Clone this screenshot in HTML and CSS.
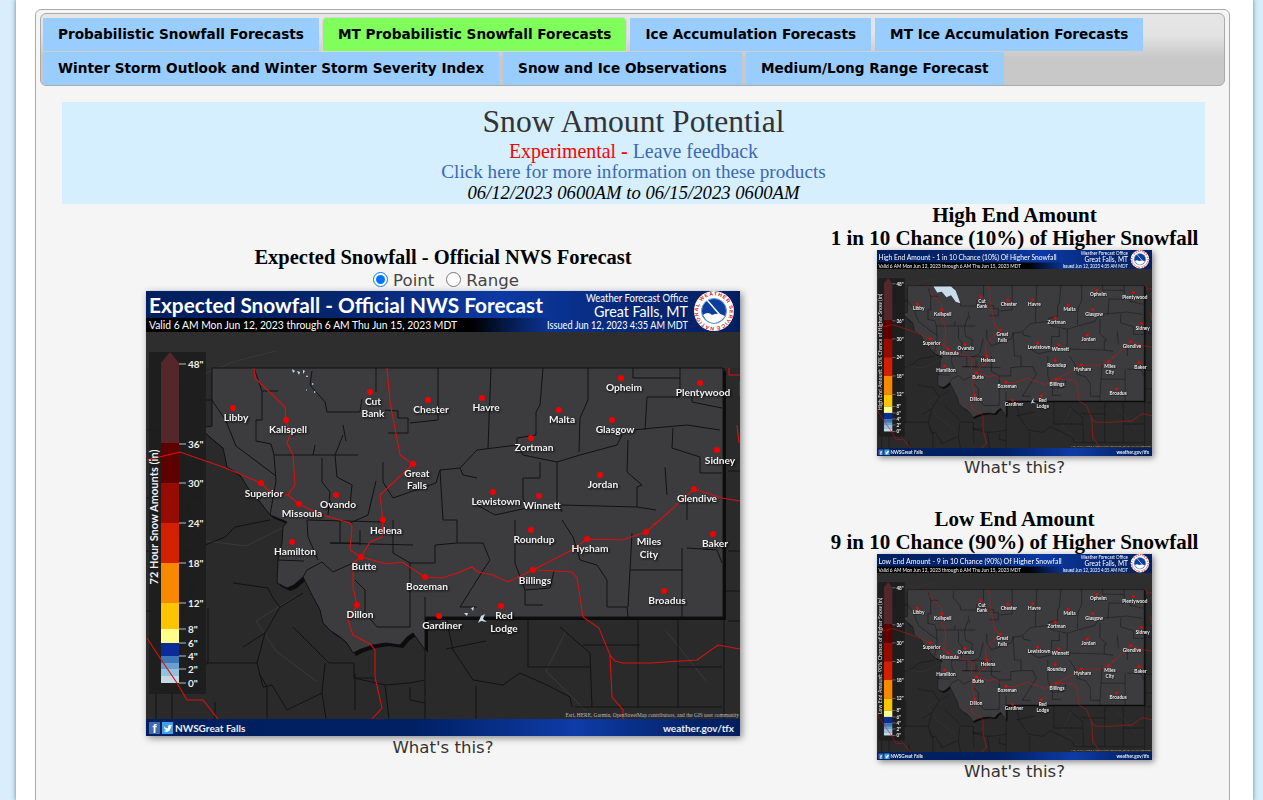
FILE: index.html
```html
<!DOCTYPE html>
<html lang="en">
<head>
<meta charset="utf-8">
<title>Snow Amount Potential</title>
<link rel="stylesheet" href="styles.css">
</head>
<body>
<svg class="sprite" aria-hidden="true">
  <defs>
    <linearGradient id="band" x1="0" x2="1" y1="0" y2="0">
      <stop offset="0" stop-color="#001f5f"/><stop offset="0.33" stop-color="#05256e"/><stop offset="0.6" stop-color="#0c3aa4"/><stop offset="0.8" stop-color="#06297a"/><stop offset="1" stop-color="#001f5f"/>
    </linearGradient>
    <linearGradient id="strip" x1="0" x2="1" y1="0" y2="0">
      <stop offset="0.55" stop-color="#000"/><stop offset="0.68" stop-color="#000" stop-opacity="0"/>
    </linearGradient>
    <linearGradient id="foot" x1="0" x2="1" y1="0" y2="0">
      <stop offset="0" stop-color="#001f5f"/><stop offset="0.45" stop-color="#002064"/><stop offset="0.72" stop-color="#0e3ca8"/><stop offset="0.92" stop-color="#03236a"/><stop offset="1" stop-color="#001f5f"/>
    </linearGradient>
    <path id="ring" d="M568 36 a15.8 15.8 0 1 1 0.01 0"/>
    <polygon id="mt" points="66,77 577,77 577,326 279,326 279,359 267,342 261,346 254,354 240,352 227,354 215,358 207,362 201,352 194,346 185,340 177,332 174,319 166,304 157,286 148,294 141,297 131,292 132,269 136,252 137,236 141,231 124,224 114,211 104,200 94,184 81,176 79,166 77,157 66,148 54,137 66,135"/>
    <g id="base">
      <rect width="594" height="445" class="m-bg"/>
      <rect y="41" width="594" height="36" class="m-top"/>
      <path class="c-river" d="M20 230 60 250 100 255 140 235M150 305 110 330 130 360 170 390M420 340 400 380 440 420M40 90 90 70 130 60M520 340 560 390"/>
      <path class="c-out" d="M2 139 27 141M1 207H54V164M34 109H66M34 109V87M46 306V269L59 254 47 236 40 207M62 317V372H111L119 342 134 316 157 302M147 336 183 372H208V387H229M26 402V428M69 411V428M121 396V428M113 382 121 396M209 382V419M264 396V409M279 356V428M382 326V376H444M492 329V416M532 329V416M532 376H576M437 354H494M414 336 444 362 446 416M429 416H576M374 382 357 394 327 389 307 359 300 326M374 382 401 394 424 406 426 416M578 77V428M582 180H594M582 330H594M582 260H594M59 254 79 246 89 236 124 229M47 296 37 319M87 292 122 297 127 307 134 316M97 356 119 342M111 372 117 396 126 394 141 419 176 402 179 372M208 387 239 394 264 392 279 389M239 394 243 428M176 402 180 428M264 409 279 412M62 372 26 402 10 380M0 260H46M0 320H37M37 319 30 350 62 372M300 358 340 350M330 428V395M600 300H578M10 428V402"/>
      <use href="#mt" class="mt-shadow" x="3" y="3"/>
      <use href="#mt" class="mt"/>
      <path class="c-river" d="M80 140 120 165 150 170M230 150 270 160 300 190M330 190 350 170 370 190M480 230 510 215 540 210M420 270 400 290 380 325"/>
      <path class="c-in" d="M108 77 116 100H132M116 100V129H110V150L125 153 128 164H212M181 121H214L216 108M230 77V101M239 119 252 120V127H262V142H242M292 77V129L264 132M181 121 179 111 164 94 166 80M197 134 200 150M197 144 189 164 191 186 206 194 204 214 191 217 184 210M176 167V191L184 201 182 224M169 154 167 164M237 171V191L247 207 290 192M345 77 342 157M397 77 394 114 390 121V144L371 147V154L331 159M442 77V109L434 127 433 161M487 77V87H534M534 77V106H501L499 139M546 106V111L576 117M487 139 507 137 541 134 574 139M476 144 471 154 434 164 411 171 377 164 371 154M527 137 526 157 554 166V182H576M482 149 481 181 496 194 491 196V216M519 176 521 204M411 171V211L416 221M377 187H394V171M377 187V207L381 217M331 187 317 184 314 177 294 179M314 177 331 159M331 214 349 224 381 217M416 214 491 216 510 219M311 229V252H337L344 269 336 281 326 297 314 316H331M369 229V272L379 299 404 297 408 280M379 299V314H397M416 229 427 246 434 269 451 274 461 289V316H481L482 326M486 242 484 279H537M536 257V326M541 257 571 259 576 272M541 229V205M484 279 482 316M66 109 80 130 90 155 130 185M230 190 222 224 204 232M158 270 132 269M184 252H214M176 271 161 279 157 286M194 252V229M214 254V239M247 229V262L264 272V336M219 299V322L231 336H264M289 254V272H264M279 306V326M176 271 187 281 207 272M209 289 219 299M267 254 184 252M161 229 162 246 172 269M290 192 294 179M294 179 297 229 311 229M237 231 161 229M289 254 311 252M128 164 130 190 124 224"/>
      <rect x="3" y="61" width="57" height="342" class="lg-bg"/>
      <polygon points="24,61 33,72 33,152 15,152 15,72" class="lg0"/>
      <rect x="15" y="152" width="18" height="40" class="lg1"/>
      <rect x="15" y="192" width="18" height="40" class="lg2"/>
      <rect x="15" y="232" width="18" height="40" class="lg3"/>
      <rect x="15" y="272" width="18" height="40" class="lg4"/>
      <rect x="15" y="312" width="18" height="26" class="lg5"/>
      <rect x="15" y="338" width="18" height="14" class="lg6"/>
      <rect x="15" y="352" width="18" height="13" class="lg7"/>
      <rect x="15" y="365" width="18" height="7" class="lg8"/>
      <rect x="15" y="372" width="18" height="6" class="lg9"/>
      <rect x="15" y="378" width="18" height="7" class="lg10"/>
      <rect x="15" y="385" width="18" height="7" class="lg11"/>
      <path class="tick" d="M33 73H40M33 153H40M33 192H40M33 232H40M33 272H40M33 312H40M33 338H40M33 352H40M33 365H40M33 378H40M33 392H40"/>
      <g class="lg-t">
        <text x="42" y="77">48"</text><text x="42" y="157">36"</text><text x="42" y="196">30"</text><text x="42" y="236">24"</text><text x="42" y="276">18"</text><text x="42" y="316">12"</text><text x="42" y="342">8"</text><text x="42" y="356">6"</text><text x="42" y="369">4"</text><text x="42" y="382">2"</text><text x="42" y="396">0"</text>
      </g>
      <path class="road" d="M108 77 109 87 139 116 140 129 144 144 141 152 147 164 149 194 142 204 153 213M1 169 34 161 77 176 115 192 127 204 142 204M153 213 176 224 204 232 206 236 204 259 215 266 241 273 256 271 279 286 296 287 314 281 326 276 332 281 347 284 362 291 387 279 426 259 441 248 476 249 500 241 514 229 548 198 576 207 594 210M514 229 507 234M241 77 244 111 254 164 267 173 234 204 237 231 236 246 224 251 215 266 207 272 207 296 211 314 202 329 207 344 224 353 229 359 229 386 236 417 226 428M391 279 426 281 431 287 437 326 453 337 464 364 466 406 477 419V428M464 364 469 370 477 372 504 372 551 369 572 354 594 358M1 347 14 367 31 392 41 409 57 409 72 428M583 77V84H594M591 134 593 152M594 90V105"/>
      <g class="dots">
        <circle cx="87" cy="117" r="3"/><circle cx="140" cy="129" r="3"/><circle cx="224" cy="101" r="3"/><circle cx="282" cy="109" r="3"/><circle cx="336" cy="107" r="3"/><circle cx="413" cy="119" r="3"/><circle cx="475" cy="87" r="3"/><circle cx="554" cy="92" r="3"/><circle cx="466" cy="129" r="3"/><circle cx="385" cy="147" r="3"/><circle cx="571" cy="159" r="3"/><circle cx="454" cy="184" r="3"/><circle cx="347" cy="201" r="3"/><circle cx="393" cy="205" r="3"/><circle cx="548" cy="198" r="3"/><circle cx="267" cy="173" r="3"/><circle cx="115" cy="192" r="3"/><circle cx="190" cy="204" r="3"/><circle cx="153" cy="213" r="3"/><circle cx="237" cy="229" r="3"/><circle cx="146" cy="251" r="3"/><circle cx="215" cy="266" r="3"/><circle cx="279" cy="286" r="3"/><circle cx="211" cy="314" r="3"/><circle cx="293" cy="325" r="3"/><circle cx="355" cy="315" r="3"/><circle cx="385" cy="239" r="3"/><circle cx="441" cy="248" r="3"/><circle cx="387" cy="279" r="3"/><circle cx="500" cy="241" r="3"/><circle cx="567" cy="243" r="3"/><circle cx="518" cy="300" r="3"/>
      </g>
      <g class="city">
        <text x="90" y="130">Libby</text><text x="142" y="142">Kalispell</text><text x="227" y="114">Cut</text><text x="227" y="126">Bank</text><text x="285" y="122">Chester</text><text x="340" y="120">Havre</text><text x="416" y="132">Malta</text><text x="478" y="100">Opheim</text><text x="557" y="105">Plentywood</text><text x="469" y="142">Glasgow</text><text x="388" y="160">Zortman</text><text x="574" y="173">Sidney</text><text x="457" y="197">Jordan</text><text x="350" y="214">Lewistown</text><text x="396" y="218">Winnett</text><text x="551" y="211">Glendive</text><text x="271" y="186">Great</text><text x="271" y="198">Falls</text><text x="118" y="206">Superior</text><text x="192" y="217">Ovando</text><text x="156" y="226">Missoula</text><text x="240" y="243">Helena</text><text x="149" y="264">Hamilton</text><text x="218" y="279">Butte</text><text x="281" y="299">Bozeman</text><text x="214" y="327">Dillon</text><text x="296" y="338">Gardiner</text><text x="358" y="328">Red</text><text x="358" y="341">Lodge</text><text x="388" y="252">Roundup</text><text x="444" y="261">Hysham</text><text x="389" y="293">Billings</text><text x="503" y="254">Miles</text><text x="503" y="267">City</text><text x="569" y="256">Baker</text><text x="521" y="313">Broadus</text>
      </g>
      <rect width="594" height="41" fill="url(#band)"/>
      <rect y="27" width="594" height="14" fill="url(#strip)"/>
      <text x="542" y="11" class="hd r" textLength="102" lengthAdjust="spacingAndGlyphs">Weather Forecast Office</text>
      <text x="542" y="26" class="hd r big" textLength="94" lengthAdjust="spacingAndGlyphs">Great Falls, MT</text>
      <text x="542" y="38" class="hd r" textLength="141" lengthAdjust="spacingAndGlyphs">Issued Jun 12, 2023 4:35 AM MDT</text>
      <text x="3" y="38" class="hd" textLength="308" lengthAdjust="spacingAndGlyphs">Valid 6 AM Mon Jun 12, 2023 through 6 AM Thu Jun 15, 2023 MDT</text>
      <circle cx="568" cy="20" r="20" class="lo-w"/>
      <text class="lo-t"><textPath href="#ring" textLength="96">NATIONAL WEATHER SERVICE</textPath></text>
      <circle cx="568" cy="20" r="12.5" class="lo-b"/>
      <path class="lo-c" d="M557 24Q562 20 566 24 572 21 579 25 574 32 568 32 561 32 557 24Z"/>
      <path class="lo-s" d="M561 9 574 24"/>
      <rect y="428" width="594" height="17" fill="url(#foot)"/>
      <rect x="3" y="431" width="11" height="12" class="fb"/>
      <text x="6.5" y="442" class="fb-t">f</text>
      <rect x="16" y="431" width="11" height="12" class="tw"/>
      <path class="tw-g" d="M18 435Q20 438 22 437 22 433 25 434L26 434 25 436Q24 441 20 441 19 441 18 440 20 440 20 439 18 438 18 435Z"/>
      <text x="29" y="441" class="ft">NWSGreat Falls</text>
      <text x="588" y="441" class="ft r">weather.gov/tfx</text>
      <text x="593" y="426" class="cr r">Esri, HERE, Garmin, OpenStreetMap contributors, and the GIS user community</text>
    </g>
  </defs>
</svg>
<div class="page">
  <div class="panel">
    <nav class="tabs">
      <a class="tab">Probabilistic Snowfall Forecasts</a>
      <a class="tab active">MT Probabilistic Snowfall Forecasts</a>
      <a class="tab">Ice Accumulation Forecasts</a>
      <a class="tab">MT Ice Accumulation Forecasts</a>
      <a class="tab">Winter Storm Outlook and Winter Storm Severity Index</a>
      <a class="tab">Snow and Ice Observations</a>
      <a class="tab">Medium/Long Range Forecast</a>
    </nav>
    <main class="content">
      <header class="banner">
        <h1 class="title">Snow Amount Potential</h1>
        <div class="line l1"><span class="exp">Experimental</span> <b class="exp">-</b> <a class="link">Leave feedback</a></div>
        <div class="line l2"><a class="link">Click here for more information on these products</a></div>
        <div class="line l3 date">06/12/2023 0600AM to 06/15/2023 0600AM</div>
      </header>
      <div class="cols">
        <section class="main-col">
          <h2 class="head">Expected Snowfall - Official NWS Forecast</h2>
          <form class="choice">
            <label class="opt"><input type="radio" name="t" checked>Point</label>
            <label class="opt"><input type="radio" name="t">Range</label>
          </form>
          <svg class="map-big" viewBox="0 0 594 445" role="img" aria-label="Expected Snowfall map">
            <use href="#base"/>
            <text x="3" y="22" class="ttl" textLength="394" lengthAdjust="spacingAndGlyphs">Expected Snowfall - Official NWS Forecast</text>
            <path class="lake" d="M146 78l3 2-2 2zM151 80l3 1-1 3zM157 79l2 1-2 3zM161 84l1 2-2 0zM166 92l2 1-2 1zM160 98l1 1-1 1zM168 100l2 1-2 1z"/>
            <path class="lake" d="M335 325l4-2-2 5 4 3-6-1-3 2zM325 317l3-1-1 4zM318 322l4 0-1 3z"/>
            <text transform="translate(12 226) rotate(-90)" class="lg-n" textLength="135">72 Hour Snow Amounts (in)</text>
          </svg>
          <div class="what">What's this?</div>
        </section>
        <aside class="side-col">
          <div class="side">
            <h2 class="head side-h">High End Amount<br>1 in 10 Chance (10%) of Higher Snowfall</h2>
            <svg class="map-small" viewBox="0 0 594 445" role="img" aria-label="High end map">
              <use href="#base"/>
              <text x="3" y="22" class="ttl-s" textLength="385" lengthAdjust="spacingAndGlyphs">High End Amount - 1 in 10 Chance (10%) Of Higher Snowfall</text>
              <path class="lake" d="M122 79 160 79 170 88 180 115 170 112 160 98 150 102 140 90 130 92Z"/>
              <path class="lake" d="M335 325l4-6-2 8 6 4-8-1-3 2z"/>
              <text transform="translate(11 220) rotate(-90)" class="lg-n s" textLength="251">High End Amount: 10% Chance of Higher Snow (in)</text>
            </svg>
            <div class="what">What's this?</div>
          </div>
          <div class="side">
            <h2 class="head side-h">Low End Amount<br>9 in 10 Chance (90%) of Higher Snowfall</h2>
            <svg class="map-small" viewBox="0 0 594 445" role="img" aria-label="Low end map">
              <use href="#base"/>
              <text x="3" y="22" class="ttl-s" textLength="396" lengthAdjust="spacingAndGlyphs">Low End Amount - 9 in 10 Chance (90%) Of Higher Snowfall</text>
              <text transform="translate(11 220) rotate(-90)" class="lg-n s" textLength="251">Low End Amount: 90% Chance of Higher Snow (in)</text>
            </svg>
            <div class="what">What's this?</div>
          </div>
        </aside>
      </div>
    </main>
  </div>
</div>
</body>
</html>
```
FILE: styles.css
```css
html, body { margin: 0; padding: 0; height: 100%; overflow: hidden; }
body { background: #d8eefc; font-family: "DejaVu Sans", sans-serif; color: #333; }
.sprite { display: block; width: 0; height: 0; }
.page { height: 100vh; margin: 0 10px 0 16px; padding: 9px 23px 0 19px; background: #fff; box-shadow: 0 0 4px 1px rgba(70,100,120,.55); box-sizing: border-box; overflow: hidden; }
.panel { height: 1200px; box-sizing: border-box; padding: 3px 4px 0; border: 1px solid #aaa; border-radius: 6px; background: #f5f5f5; }
.tabs { display: flex; flex-wrap: wrap; align-content: flex-start; gap: 1px 4px; padding: 4px 2px 0; height: 67px; box-sizing: content-box; border: 1px solid #aaa; border-radius: 6px; background: linear-gradient(#e6e6e6 0, #e2e2e2 30%, #c8c8c8 62%, #c8c8c8 100%); }
.tab { height: 33px; padding: 0 15px; background: #99ccff; color: #000; font: bold 13.65px/33px "DejaVu Sans", sans-serif; white-space: nowrap; }
.active { background: #80ff5c; border-radius: 4px 4px 0 0; box-shadow: 0 0 0 1px #d8d8d8; }
.content { margin: 16px 20px 0 22px; }
.banner { background: #d6effe; text-align: center; height: 101.5px; font-family: "Liberation Serif", serif; line-height: 21px; }
.title { margin: 0; font-size: 31.6px; line-height: 39px; font-weight: 400; color: #333; }
.l1 { font-size: 19.9px; line-height: 20px; }
.l2 { font-size: 19.15px; }
.l3 { font-size: 18.7px; }
.exp { color: #f00; }
.link { color: #3b68b4; }
.date { font-style: italic; color: #000; }
.cols { display: grid; grid-template-columns: 2fr 1fr; }
.main-col { margin-top: 42px; text-align: center; }
.side-col { text-align: center; }
.head { margin: 0; font: bold 20.5px/23px "Liberation Serif", serif; color: #000; }
.side-h { font-size: 21px; }
.choice { height: 20px; padding: 2px 0 0 6px; line-height: 20px; font-size: 16.6px; color: #444; display: flex; justify-content: center; gap: 12px; }
.opt { display: inline-flex; align-items: center; }
.opt input { width: 15px; height: 15px; margin: 0 5px 3px 0; }
.map-big { display: block; width: 594px; height: 445px; margin: 0 auto; box-shadow: 2px 2px 7px rgba(0,0,0,.45); }
.map-small { display: block; width: 275px; height: 206px; margin: 0 auto; box-shadow: 2px 2px 6px rgba(0,0,0,.45); filter: blur(.35px); }
.what { padding-top: 1px; font-size: 16.6px; line-height: 22px; color: #333; }
.side { height: 304px; }

.m-bg { fill: #2b2a2b; }
.m-top { fill: #2e2e2e; }
.mt { fill: #3c3b3e; stroke: #111; stroke-width: 1; }
.mt-shadow { fill: #0c0c0c; }
.c-in, .c-out { fill: none; stroke: #121212; stroke-width: 1; }
.c-river { fill: none; stroke: #3f3f41; stroke-width: .7; }
.road { fill: none; stroke: #d81210; stroke-width: 1.1; }
.dots { fill: #f40000; }
.city { font: 700 10.2px "Lato", sans-serif; fill: #f2f2f2; text-anchor: middle; filter: drop-shadow(1px 1px 1px #000); }
.lake { fill: #c8dcec; }
.lg-bg { fill: #1d1d1d; fill-opacity: .92; }
.lg0 { fill: #54282a; }
.lg1 { fill: #5f0000; }
.lg2 { fill: #960c00; }
.lg3 { fill: #d22000; }
.lg4 { fill: #f78800; }
.lg5 { fill: #fdc500; }
.lg6 { fill: #ffff8a; }
.lg7 { fill: #0b2b96; }
.lg8 { fill: #3f76b8; }
.lg9 { fill: #6ba0d0; }
.lg10 { fill: #94c1de; }
.lg11 { fill: #c5d8e6; }
.tick { stroke: #bbb; stroke-width: 1; fill: none; }
.lg-t { font: 700 10px "Lato", sans-serif; fill: #eee; }
.lg-n { font: 700 11px "Lato", sans-serif; fill: #f0f0f0; text-anchor: middle; }
.lg-n.s { font-size: 10.5px; font-weight: 400; }
.hd { font: 400 10.5px "Lato", sans-serif; fill: #fff; }
.big { font-size: 15px; }
.r { text-anchor: end; }
.ttl { font: 700 20px "Lato", sans-serif; fill: #fff; }
.ttl-s { font: 400 15px "Lato", sans-serif; fill: #fff; }
.ft { font: 700 10px "Lato", sans-serif; fill: #eee; }
.cr { font: 400 5.4px "Liberation Serif", serif; fill: #bbb; }
.fb { fill: #3f6bb0; }
.fb-t { font: 700 12px "Liberation Sans", sans-serif; fill: #fff; }
.tw { fill: #3fa2e8; }
.tw-g { fill: #fff; }
.lo-w { fill: #fff; }
.lo-t { font: 700 5.2px "Liberation Sans", sans-serif; fill: #d92020; }
.lo-b { fill: #0d3e9c; stroke: #6aa0d8; stroke-width: 1; }
.lo-c { fill: #fff; }
.lo-s { stroke: #fff; stroke-width: 1.4; }
```
